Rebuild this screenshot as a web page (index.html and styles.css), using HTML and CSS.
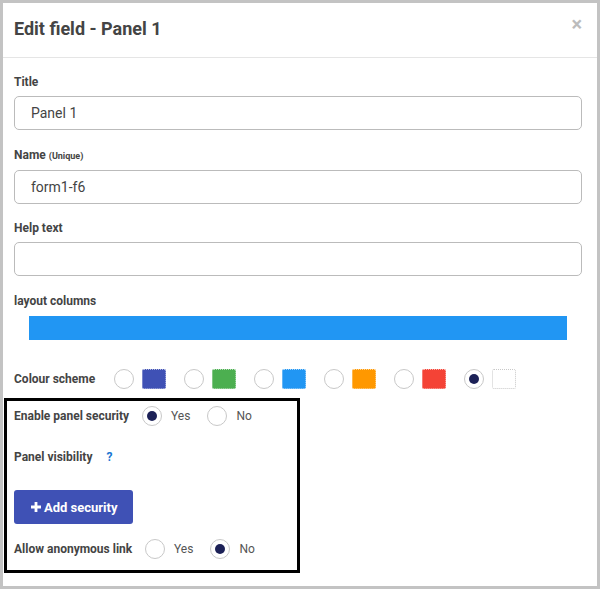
FILE: index.html
```html
<!DOCTYPE html>
<html>
<head>
<meta charset="utf-8">
<link rel="stylesheet" href="styles.css">
</head>
<body>
<div class="dialog">
  <div class="header">
    <h1 class="title">Edit field - Panel 1</h1>
    <span class="close">×</span>
  </div>
  <div class="content">
    <div class="group">
      <div class="label">Title</div>
      <div class="input">Panel 1</div>
    </div>
    <div class="group">
      <div class="label">Name <span class="small">(Unique)</span></div>
      <div class="input">form1-f6</div>
    </div>
    <div class="group">
      <div class="label">Help text</div>
      <div class="input"></div>
    </div>
    <div class="label">layout columns</div>
    <div class="bar"></div>
    <div class="scheme">
      <div class="label scheme-label">Colour scheme</div>
      <div class="swatches">
        <span class="opt"><span class="radio"></span><span class="swatch c1"></span></span>
        <span class="opt"><span class="radio"></span><span class="swatch c2"></span></span>
        <span class="opt"><span class="radio"></span><span class="swatch c3"></span></span>
        <span class="opt"><span class="radio"></span><span class="swatch c4"></span></span>
        <span class="opt"><span class="radio"></span><span class="swatch c5"></span></span>
        <span class="opt"><span class="radio checked"></span><span class="swatch c6"></span></span>
      </div>
    </div>
    <div class="box">
      <div class="row r1">
        <span class="label inline l1">Enable panel security</span>
        <span class="radio checked"></span><span class="rtext">Yes</span>
        <span class="radio gap"></span><span class="rtext">No</span>
      </div>
      <div class="row r2">
        <span class="label inline">Panel visibility</span>
        <span class="help">?</span>
      </div>
      <button class="btn"><svg class="plus" viewBox="0 0 10 10" width="10" height="10"><path d="M3.6 0h2.8v3.6H10v2.8H6.4V10H3.6V6.4H0V3.6h3.6z" fill="#fff"/></svg>Add security</button>
      <div class="row r3">
        <span class="label inline l3">Allow anonymous link</span>
        <span class="radio"></span><span class="rtext">Yes</span>
        <span class="radio checked gap2"></span><span class="rtext">No</span>
      </div>
    </div>
  </div>
</div>
</body>
</html>
```
FILE: styles.css
```css
html, body {
  margin: 0;
  padding: 0;
}
body {
  background: #c3c3c3;
  width: 600px;
  height: 589px;
  padding: 3px 3px 3px 3px;
  box-sizing: border-box;
  font-family: Roboto, "Liberation Sans", Arial, sans-serif;
  color: #444;
}
.dialog {
  background: #fff;
  width: 594px;
  height: 583px;
  overflow: hidden;
}
.header {
  height: 54px;
  border-bottom: 1px solid #e5e5e5;
  display: flex;
  align-items: center;
  justify-content: space-between;
  padding: 0 15px 0 11px;
}
.title {
  margin: 0;
  font-size: 18px;
  font-weight: 700;
  color: #444;
  position: relative;
  top: -2px;
}
.close {
  font-size: 20px;
  font-weight: 700;
  color: #bcbcbc;
  position: relative;
  top: -6px;
}
.content {
  padding: 17px 15px 0 11px;
}
.label {
  font-size: 12px;
  font-weight: 700;
  line-height: 15px;
  color: #444;
}
.small {
  font-size: 9px;
}
.group {
  height: 73px;
}
.input {
  margin-top: 6px;
  height: 34px;
  box-sizing: border-box;
  border: 1px solid #bbb;
  border-radius: 5px;
  padding-left: 16px;
  font-size: 14px;
  line-height: 32px;
  color: #444;
}
.bar {
  margin: 7px 0 0 15px;
  width: 538px;
  height: 24px;
  background: #2196f3;
}
.scheme {
  display: flex;
  align-items: center;
  margin-top: 28px;
  height: 22px;
}
.scheme-label {
  width: 100px;
}
.swatches {
  display: flex;
}
.opt {
  display: flex;
  align-items: center;
  width: 70px;
}
.radio {
  display: inline-block;
  width: 20px;
  height: 20px;
  box-sizing: border-box;
  border: 1px solid #c8c8c8;
  border-radius: 50%;
  background: #fff;
  position: relative;
  flex: none;
}
.radio.checked::after {
  content: "";
  position: absolute;
  left: 4px;
  top: 4px;
  width: 10px;
  height: 10px;
  border-radius: 50%;
  background: #1c2157;
}
.swatch {
  display: inline-block;
  width: 24px;
  height: 20px;
  margin-left: 8px;
  box-sizing: border-box;
  border: 1px dotted rgba(255,255,255,0.6);
  border-radius: 2px;
}
.c1 { background: #3f51b5; }
.c2 { background: #4caf50; }
.c3 { background: #2196f3; }
.c4 { background: #ff9800; }
.c5 { background: #f44336; }
.c6 { background: #fff; border: 1px dotted #c8c8c8; }
.box {
  margin: 8px 0 0 -10px;
  width: 296px;
  height: 175px;
  box-sizing: border-box;
  border: 3px solid #000;
  padding: 0 0 0 7px;
}
.row {
  display: flex;
  align-items: center;
  height: 30px;
}
.label.inline {
  display: inline-block;
}
.l1 { width: 128px; }
.l3 { width: 131px; }
.rtext {
  font-size: 12px;
  color: #555;
  margin-left: 9px;
}
.gap { margin-left: 17px; }
.gap2 { margin-left: 17px; }
.r2 {
  margin-top: 11px;
}
.help {
  color: #1976d2;
  font-weight: 700;
  font-size: 12px;
  margin-left: 14px;
}
.btn {
  display: flex;
  align-items: center;
  margin-top: 18px;
  width: 119px;
  height: 34px;
  border: none;
  border-radius: 3px;
  background: #3f51b5;
  color: #fff;
  font-family: Roboto, "Liberation Sans", Arial, sans-serif;
  font-size: 13px;
  font-weight: 700;
  padding: 0 0 0 17px;
}
.plus {
  margin-right: 3px;
}
.r3 {
  margin-top: 10px;
}
```
